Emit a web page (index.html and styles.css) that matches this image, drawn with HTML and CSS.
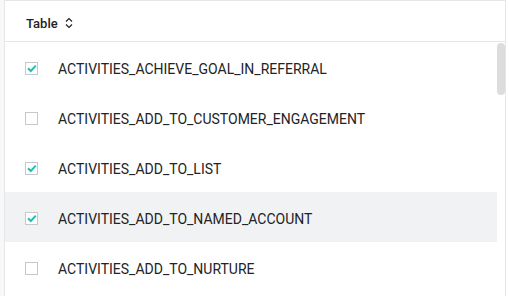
FILE: index.html
```html
<!DOCTYPE html>
<html lang="en">
<head>
  <meta charset="UTF-8" />
  <title>Tables</title>
  <link rel="stylesheet" href="styles.css">
</head>
<body>
  <div class="panel">
    <div class="table-header">
      <span class="col-title">Table</span>
      <svg class="sort-icon" width="8" height="12" viewBox="0 0 8 12">
        <polyline points="1,4.5 4,1.5 7,4.5" />
        <polyline points="1,7.5 4,10.5 7,7.5" />
      </svg>
    </div>

    <div class="table-body">
      <div class="rows">
        <div class="row">
          <span class="check checked"><svg viewBox="0 0 11 11"><polyline points="2,5.2 4.8,8 9.8,2.6" /></svg></span>
          <span class="name">ACTIVITIES_ACHIEVE_GOAL_IN_REFERRAL</span>
        </div>
        <div class="row">
          <span class="check"></span>
          <span class="name">ACTIVITIES_ADD_TO_CUSTOMER_ENGAGEMENT</span>
        </div>
        <div class="row">
          <span class="check checked"><svg viewBox="0 0 11 11"><polyline points="2,5.2 4.8,8 9.8,2.6" /></svg></span>
          <span class="name">ACTIVITIES_ADD_TO_LIST</span>
        </div>
        <div class="row hover">
          <span class="check checked"><svg viewBox="0 0 11 11"><polyline points="2,5.2 4.8,8 9.8,2.6" /></svg></span>
          <span class="name">ACTIVITIES_ADD_TO_NAMED_ACCOUNT</span>
        </div>
        <div class="row">
          <span class="check"></span>
          <span class="name">ACTIVITIES_ADD_TO_NURTURE</span>
        </div>
      </div>
      <div class="scroll-track">
        <div class="scroll-thumb"></div>
      </div>
    </div>
  </div>
</body>
</html>
```

FILE: styles.css
```css
* {
  box-sizing: border-box;
}

body {
  margin: 0;
  padding-left: 4px;
  height: 296px;
  overflow: hidden;
  font-family: Roboto, 'Liberation Sans', sans-serif;
  color: #222326;
  background: linear-gradient(to right, #f8f8f8 4px, #ffffff 4px);
}

.panel {
  width: 502px;
  height: 296px;
  border: 1px solid #e6e6e6;
  border-bottom: none;
  background: #fff;
  display: flex;
  flex-direction: column;
}

.table-header {
  height: 41px;
  flex-shrink: 0;
  border-bottom: 1px solid #e6e6e6;
  display: flex;
  align-items: center;
  padding: 4px 0 0 21px;
  gap: 7px;
}

.col-title {
  font-size: 13px;
  font-weight: 500;
}

.sort-icon polyline {
  fill: none;
  stroke: #222;
  stroke-width: 1.2;
}

.table-body {
  flex: 1;
  display: flex;
  overflow: hidden;
}

.rows {
  flex: 1;
}

.row {
  height: 50px;
  display: flex;
  align-items: center;
  padding: 2px 0 0 20px;
  gap: 20px;
}

.row.hover {
  background: #f1f2f4;
}

.check {
  width: 13px;
  height: 13px;
  border: 1px solid #c6c8cc;
  background: #fff;
  flex-shrink: 0;
  display: flex;
}

.check svg {
  width: 11px;
  height: 11px;
}

.check polyline {
  fill: none;
  stroke: #1ec0b4;
  stroke-width: 2;
}

.name {
  font-size: 14px;
  white-space: nowrap;
  padding-top: 1px;
}

.scroll-track {
  width: 8px;
  flex-shrink: 0;
}

.scroll-thumb {
  margin-top: 1px;
  height: 52px;
  border-radius: 4px;
  background: #dcdcdc;
}
```
